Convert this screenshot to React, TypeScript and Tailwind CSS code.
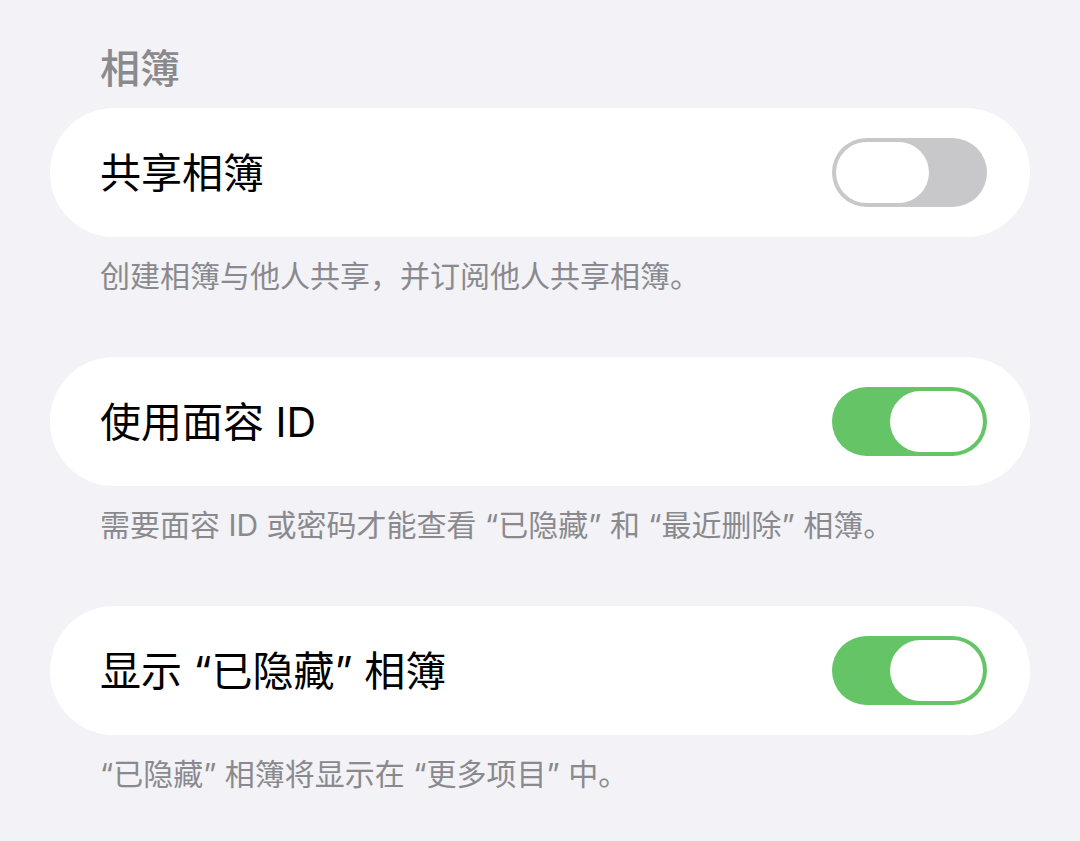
const font = { fontFamily: '"Inter", "Noto Sans CJK SC", sans-serif' };

function Toggle({ on }: { on: boolean }) {
  return (
    <div
      className={`flex h-[69px] w-[155px] shrink-0 items-center rounded-full p-[4px] ${
        on ? "justify-end bg-[#65c466]" : "justify-start bg-[#c8c8ca]"
      }`}
    >
      <div className="h-[61px] w-[93px] rounded-full bg-white" />
    </div>
  );
}

function Row({ title, on, note }: { title: string; on: boolean; note: string }) {
  return (
    <div>
      <div className="flex h-[129px] items-center justify-between rounded-[64px] bg-white pl-[50px] pr-[43px]">
        <span className="text-[41px] leading-[48px] text-black">{title}</span>
        <Toggle on={on} />
      </div>
      <p className="mt-[19px] mb-[61px] pl-[50px] text-[30px] leading-[40px] text-[#8a8a8e]">
        {note}
      </p>
    </div>
  );
}

export default function App() {
  return (
    <div className="min-h-[841px] bg-[#f2f2f7] px-[50px] pt-[47px]" style={font}>
      <h2 className="mb-[17px] pl-[50px] text-[40px] font-medium leading-[44px] text-[#8a8a8e]">
        相簿
      </h2>
      <Row title="共享相簿" on={false} note="创建相簿与他人共享，并订阅他人共享相簿。" />
      <Row
        title="使用面容 ID"
        on={true}
        note="需要面容 ID 或密码才能查看 “已隐藏” 和 “最近删除” 相簿。"
      />
      <Row
        title="显示 “已隐藏” 相簿"
        on={true}
        note="“已隐藏” 相簿将显示在 “更多项目” 中。"
      />
    </div>
  );
}
